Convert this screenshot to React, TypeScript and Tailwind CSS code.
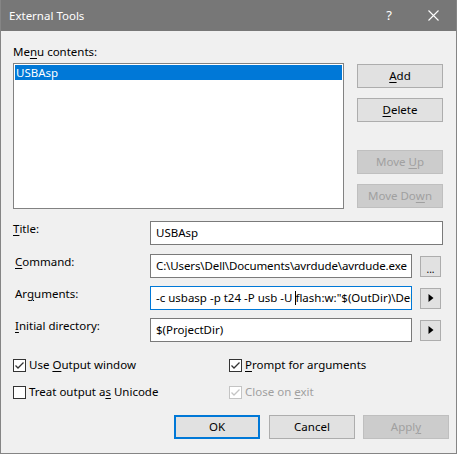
import React from 'react';

// Mnemonic letter (underlined access key)
const Mn: React.FC<{ children: React.ReactNode }> = ({ children }) => (
  <span className="underline underline-offset-[2px] decoration-1">{children}</span>
);

interface BtnProps {
  children: React.ReactNode;
  disabled?: boolean;
  focused?: boolean;
  className?: string;
}

const Btn: React.FC<BtnProps> = ({ children, disabled, focused, className = '' }) => {
  let look = 'bg-[#e1e1e1] border border-[#adadad] text-black';
  if (disabled) look = 'bg-[#cccccc] border border-[#bfbfbf] text-[#a0a0a0]';
  if (focused) look = 'bg-[#e1e1e1] border-2 border-[#0078d7] text-black';
  return (
    <div className={`flex items-center justify-center shrink-0 w-[86px] h-[24px] leading-[16px] ${look} ${className}`}>
      {children}
    </div>
  );
};

const Check: React.FC<{ checked?: boolean; disabled?: boolean; children: React.ReactNode }> = ({
  checked,
  disabled,
  children,
}) => (
  <div className={`flex items-center h-[16px] ${disabled ? 'text-[#a0a0a0]' : 'text-black'}`}>
    <div
      className={`w-[13px] h-[13px] shrink-0 bg-white border ${disabled ? 'border-[#c4c4c4]' : 'border-[#333333]'}`}
    >
      {checked && (
        <svg width="11" height="11" viewBox="0 0 11 11">
          <path
            d="M1.5 5.5 L4 8 L9.5 2.5"
            fill="none"
            stroke={disabled ? '#c4c4c4' : '#333333'}
            strokeWidth="1.3"
          />
        </svg>
      )}
    </div>
    <span className="ml-[3px] whitespace-nowrap">{children}</span>
  </div>
);

const ArrowBtn: React.FC = () => (
  <div className="ml-[8px] w-[21px] h-[21px] shrink-0 bg-[#e1e1e1] border border-[#adadad] flex items-center justify-center">
    <svg width="6" height="8" viewBox="0 0 6 8">
      <polygon points="0.5,0 5.5,4 0.5,8" fill="#000" />
    </svg>
  </div>
);

const App: React.FC = () => {
  return (
    <div className="w-[457px] h-[454px] bg-[#f0f0f0] border-x border-b border-[#858585] flex flex-col font-['Segoe_UI','Noto_Sans',sans-serif] text-[11.5px] text-black overflow-hidden">
      {/* title bar */}
      <div className="h-[31px] shrink-0 bg-[#777777] flex items-center pl-[8px] pr-[17px] text-white text-[11.5px]">
        <span>External Tools</span>
        <span className="ml-auto text-[13px]">?</span>
        <svg className="ml-[36px]" width="11" height="11" viewBox="0 0 11 11">
          <path d="M0.5 0.5 L10.5 10.5 M10.5 0.5 L0.5 10.5" stroke="#fff" strokeWidth="1.1" />
        </svg>
      </div>

      <div className="px-[12px] pt-[13px] flex flex-col">
        {/* list + side buttons */}
        <div className="flex">
          <div className="w-[331px] shrink-0 flex flex-col">
            <div className="h-[16px] leading-[16px]">
              Me<Mn>n</Mn>u contents:
            </div>
            <div className="mt-[3px] h-[146px] bg-white border border-[#828282] p-px">
              <div className="h-[15px] leading-[15px] bg-[#0078d7] text-white pl-[1px]">USBAsp</div>
            </div>
          </div>
          <div className="ml-[13px] pt-[20px] flex flex-col">
            <Btn>
              <Mn>A</Mn>dd
            </Btn>
            <Btn className="mt-[10px]">
              <Mn>D</Mn>elete
            </Btn>
            <Btn disabled className="mt-[28px]">
              Move&nbsp;<Mn>U</Mn>p
            </Btn>
            <Btn disabled className="mt-[10px]">
              Move Do<Mn>w</Mn>n
            </Btn>
          </div>
        </div>

        {/* fields */}
        <div className="mt-[12px] flex flex-col">
          <div className="flex h-[24px]">
            <div className="w-[137px] shrink-0 leading-[16px]">
              <Mn>T</Mn>itle:
            </div>
            <div className="w-[293px] h-[24px] bg-white border border-[#7a7a7a] pl-[5px] flex items-center whitespace-nowrap overflow-hidden">
              USBAsp
            </div>
          </div>
          <div className="flex items-center h-[24px] mt-[9px]">
            <div className="w-[137px] shrink-0 self-start leading-[16px] pl-[2px]">
              <Mn>C</Mn>ommand:
            </div>
            <div className="w-[262px] h-[24px] bg-white border border-[#7a7a7a] pl-[5px] flex items-center whitespace-nowrap overflow-hidden tracking-[-0.12px]">
              C:\Users\Dell\Documents\avrdude\avrdude.exe
            </div>
            <div className="ml-[8px] w-[21px] h-[21px] shrink-0 bg-[#e1e1e1] border border-[#adadad] flex items-end justify-center pb-[2px] text-[10px] leading-[10px]">
              ...
            </div>
          </div>
          <div className="flex items-center h-[24px] mt-[8px]">
            <div className="w-[137px] shrink-0 self-start leading-[16px] pl-[2px]">
              Ar<Mn>g</Mn>uments:
            </div>
            <div className="w-[262px] h-[24px] bg-white border border-[#0078d7] pl-[5px] flex items-center whitespace-nowrap overflow-hidden">
              <span>
                -c usbasp -p t24 -P usb -U{' '}
                <span className="inline-block w-0 h-[14px] border-l border-black align-[-3px] -mr-px" />
                flash:w:"$(OutDir)\Debug\$(TargetName).hex":i
              </span>
            </div>
            <ArrowBtn />
          </div>
          <div className="flex items-center h-[24px] mt-[8px]">
            <div className="w-[137px] shrink-0 self-start leading-[16px] pl-[2px]">
              <Mn>I</Mn>nitial directory:
            </div>
            <div className="w-[262px] h-[24px] bg-white border border-[#7a7a7a] pl-[5px] flex items-center whitespace-nowrap overflow-hidden">
              $(ProjectDir)
            </div>
            <ArrowBtn />
          </div>
        </div>

        {/* options */}
        <div className="mt-[15px] grid grid-cols-[216px_1fr] gap-y-[11px]">
          <Check checked>
            Use <Mn>O</Mn>utput window
          </Check>
          <Check checked>
            <Mn>P</Mn>rompt for arguments
          </Check>
          <Check>
            Treat output a<Mn>s</Mn> Unicode
          </Check>
          <Check checked disabled>
            Close on <Mn>e</Mn>xit
          </Check>
        </div>

        {/* dialog buttons */}
        <div className="mt-[15px] flex ml-[161px]">
          <Btn focused>OK</Btn>
          <Btn className="ml-[9px]">Cancel</Btn>
          <Btn disabled className="ml-[8px]">
            Appl<Mn>y</Mn>
          </Btn>
        </div>
      </div>
    </div>
  );
};

export default App;
